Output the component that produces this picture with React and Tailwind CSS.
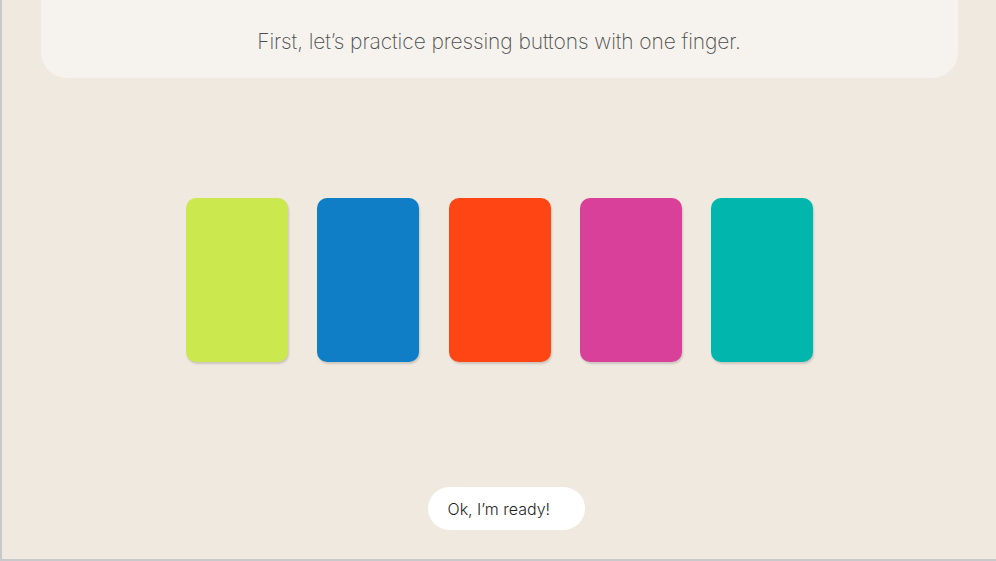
export default function App() {
  const cards = ['bg-[#cbe84e]', 'bg-[#0f7ec6]', 'bg-[#ff4514]', 'bg-[#d8409a]', 'bg-[#00b6ad]']

  return (
    <div className="w-[996px] h-[561px] bg-[#f0e9e0] border-l-2 border-b-2 border-[#c9c9cb] flex flex-col items-center font-['Inter',sans-serif]">
      {/* Prompt */}
      <div className="w-[917px] h-[78px] shrink-0 bg-[#f6f3ee] rounded-b-[26px] flex items-center justify-center pt-[6px]">
        <p className="text-[21px] font-extralight text-[#4d4d4d] tracking-[-0.1px]">
          First, let’s practice pressing buttons with one finger.
        </p>
      </div>

      {/* Buttons */}
      <div className="mt-[120px] ml-[1px] flex gap-[29.25px]">
        {cards.map((c, i) => (
          <div key={i} className={`w-[102px] h-[164px] rounded-[10px] shadow-[1px_2px_2px_rgba(0,0,0,0.15)] ${c}`} />
        ))}
      </div>

      <button className="mt-[125px] ml-[14px] w-[157px] h-[43px] rounded-full bg-white text-[16px] font-light text-[#1f1f1f] text-left pl-[20px]">
        Ok, I’m ready!
      </button>
    </div>
  )
}
